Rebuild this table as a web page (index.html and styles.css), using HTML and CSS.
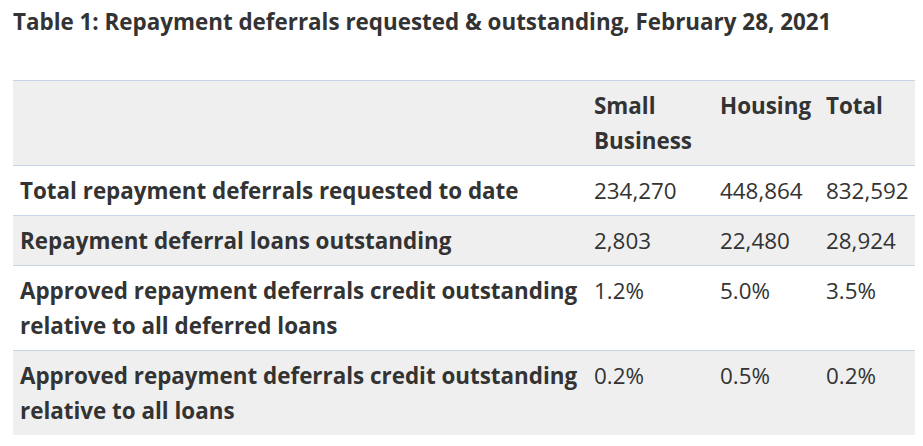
FILE: index.html
```html
<!DOCTYPE html>
<html>
<head>
<meta charset="utf-8">
<link rel="stylesheet" href="styles.css">
</head>
<body>
<div class="wrap">
  <h2 class="title">Table 1: Repayment deferrals requested &amp; outstanding, February 28, 2021</h2>
  <table class="data">
    <colgroup>
      <col class="c1"><col class="c2"><col class="c3"><col class="c4">
    </colgroup>
    <thead>
      <tr class="shade">
        <th></th>
        <th>Small Business</th>
        <th>Housing</th>
        <th>Total</th>
      </tr>
    </thead>
    <tbody>
      <tr>
        <th>Total repayment deferrals requested to date</th>
        <td>234,270</td><td>448,864</td><td>832,592</td>
      </tr>
      <tr class="shade">
        <th>Repayment deferral loans outstanding</th>
        <td>2,803</td><td>22,480</td><td>28,924</td>
      </tr>
      <tr>
        <th>Approved repayment deferrals credit outstanding relative to all deferred loans</th>
        <td>1.2%</td><td>5.0%</td><td>3.5%</td>
      </tr>
      <tr class="shade">
        <th>Approved repayment deferrals credit outstanding relative to all loans</th>
        <td>0.2%</td><td>0.5%</td><td>0.2%</td>
      </tr>
    </tbody>
  </table>
</div>
</body>
</html>
```
FILE: styles.css
```css
html, body {
  margin: 0;
  padding: 0;
  background: #ffffff;
}
body {
  font-family: "Open Sans", "Liberation Sans", sans-serif;
  color: #333333;
}
.wrap {
  padding: 0 8px 0 13px;
}
.title {
  margin: 0;
  padding-top: 4px;
  font-size: 22.4px;
  line-height: 35px;
  font-weight: 700;
  color: #333333;
  height: 76px;
}
.data {
  border-collapse: collapse;
  width: 902px;
  table-layout: fixed;
  font-size: 22.4px;
  line-height: 35px;
}
.c1 { width: 574px; }
.c2 { width: 126px; }
.c3 { width: 106px; }
.c4 { width: 96px; }
.data th, .data td {
  border-top: 1px solid #c6d6e8;
  padding: 7px 6px 7px 7px;
  text-align: left;
  vertical-align: top;
}
.data th { font-weight: 700; }
.data td { font-weight: 400; }
.data tr.shade { background: #efefef; }
```
